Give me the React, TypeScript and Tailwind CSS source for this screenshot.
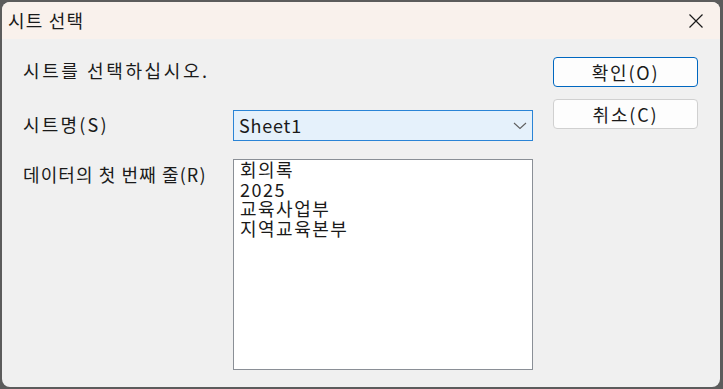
const font = { fontFamily: '"Noto Sans CJK KR", "Noto Sans", sans-serif' };

const rows = ["회의록", "2025", "교육사업부", "지역교육본부"];

const App = () => {
  return (
    <div className="w-[723px] h-[389px] bg-[#5c5c5c] pt-[2px] pl-[2px] pr-[3px] pb-[2px]" style={font}>
      <div className="h-full w-full rounded-[8px] bg-[#f0f0f0] overflow-hidden flex flex-col text-[#1a1a1a]">
        {/* title bar */}
        <div className="h-[37px] bg-[#f9f1ec] flex items-center justify-between pl-[6px] pr-[16px] shrink-0">
          <span className="text-[18px] tracking-[1.2px]">시트 선택</span>
          <svg width="16" height="16" viewBox="0 0 16 16" className="text-[#1a1a1a]">
            <path d="M1.5 1.5 L14.5 14.5 M14.5 1.5 L1.5 14.5" stroke="currentColor" strokeWidth="1.2" fill="none" />
          </svg>
        </div>

        {/* body */}
        <div className="flex flex-1 pl-[21px]">
          <div className="w-[210px] shrink-0 flex flex-col">
            <div className="h-[36px] mt-[13px] flex items-center text-[18px] tracking-[2.6px] whitespace-nowrap">시트를 선택하십시오.</div>
            <div className="h-[36px] mt-[18px] flex items-center text-[18px] tracking-[2.2px]">시트명(S)</div>
            <div className="h-[24px] mt-[20px] flex items-center text-[18px] tracking-[1.1px] whitespace-nowrap">데이터의 첫 번째 줄(R)</div>
          </div>

          <div className="w-[300px] shrink-0 flex flex-col">
            <div className="h-[31px] mt-[71px] bg-[#e5f1fb] border border-[#2a84d6] flex items-center justify-between pl-[5px] pr-[5px] text-[18px] tracking-[0.8px]">
              <span>Sheet1</span>
              <svg width="14" height="8" viewBox="0 0 14 8" className="text-[#606060]">
                <path d="M1 1 L7 6.5 L13 1" stroke="currentColor" strokeWidth="1.1" fill="none" />
              </svg>
            </div>
            <div className="h-[211px] mt-[18px] bg-white border border-[#8a8f96] pl-[6px] text-[18px] leading-[19.5px] tracking-[1.5px]">
              {rows.map((r) => (
                <div key={r}>{r}</div>
              ))}
            </div>
          </div>

          <div className="ml-[20px] mt-[18px] flex flex-col gap-[12px]">
            <button className="w-[145px] h-[30px] rounded-[4px] bg-[#fdfdfd] border-[1.5px] border-[#0067c0] text-[18px] tracking-[1.8px] leading-none">
              확인(O)
            </button>
            <button className="w-[145px] h-[30px] rounded-[4px] bg-[#fdfdfd] border border-[#d0d0d0] text-[18px] tracking-[1.8px] leading-none">
              취소(C)
            </button>
          </div>
        </div>
      </div>
    </div>
  );
};

export default App;
